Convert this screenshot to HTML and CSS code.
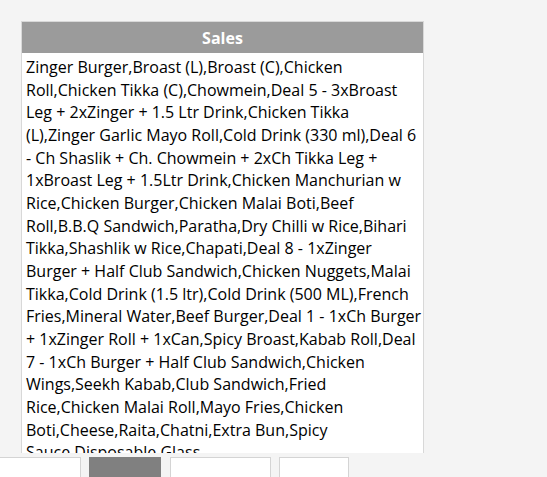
FILE: index.html
```html
<!DOCTYPE html>
<html>
<head>
<meta charset="utf-8">
<link rel="stylesheet" href="styles.css">
</head>
<body>
<div class="panel">
  <div class="panel-head">Sales</div>
  <div class="panel-body">Zinger Burger,Broast (L),Broast (C),Chicken Roll,Chicken Tikka (C),Chowmein,Deal 5 - 3xBroast Leg + 2xZinger + 1.5 Ltr Drink,Chicken Tikka (L),Zinger Garlic Mayo Roll,Cold Drink (330 ml),Deal 6 - Ch Shaslik + Ch. Chowmein + 2xCh Tikka Leg + 1xBroast Leg + 1.5Ltr Drink,Chicken Manchurian w Rice,Chicken Burger,Chicken Malai Boti,Beef Roll,B.B.Q Sandwich,Paratha,Dry Chilli w Rice,Bihari Tikka,Shashlik w Rice,Chapati,Deal 8 - 1xZinger Burger + Half Club Sandwich,Chicken Nuggets,Malai Tikka,Cold Drink (1.5 ltr),Cold Drink (500 ML),French Fries,Mineral Water,Beef Burger,Deal 1 - 1xCh Burger + 1xZinger Roll + 1xCan,Spicy Broast,Kabab Roll,Deal 7 - 1xCh Burger + Half Club Sandwich,Chicken Wings,Seekh Kabab,Club Sandwich,Fried Rice,Chicken Malai Roll,Mayo Fries,Chicken Boti,Cheese,Raita,Chatni,Extra Bun,Spicy Sauce,Disposable Glass</div>
</div>
<div class="tabs">
  <div class="tab tab-first">Items</div>
  <div class="tab tab-active">Sales</div>
  <div class="tab tab-wide">Categories</div>
  <div class="tab tab-last">More</div>
</div>
</body>
</html>
```
FILE: styles.css
```css
html, body {
  margin: 0;
  padding: 0;
  background: #f4f4f4;
  font-family: "Open Sans", "Noto Sans", sans-serif;
  overflow: hidden;
  height: 477px;
}
.panel {
  margin: 21px 0 0 21px;
  width: 403px;
  height: 432px;
  border: 1px solid #d8d8d8;
  border-bottom: none;
  background: #fff;
  display: flex;
  flex-direction: column;
  box-sizing: border-box;
}
.panel-head {
  height: 31px;
  flex-shrink: 0;
  background: #9b9b9b;
  color: #fff;
  font-weight: bold;
  font-size: 16px;
  display: flex;
  align-items: center;
  justify-content: center;
}
.panel-body {
  flex: 1;
  overflow: hidden;
  padding: 3px 1.5px 0 4px;
  font-size: 16px;
  line-height: 22.66px;
  color: #000;
}
.tabs {
  display: flex;
  margin-top: 4px;
  margin-left: -1px;
}
.tab {
  height: 30px;
  box-sizing: border-box;
  border: 1px solid #d4d4d4;
  background: #fff;
  font-size: 15px;
  line-height: 20px;
  text-align: center;
  padding-top: 19px;
  overflow: hidden;
  color: #000;
}
.tab-first { width: 82px; }
.tab-active { width: 72px; margin-left: 8px; background: #808080; border-color: #808080; color: #fff; }
.tab-wide { width: 101px; margin-left: 9px; }
.tab-last { width: 70px; margin-left: 8px; }
```
